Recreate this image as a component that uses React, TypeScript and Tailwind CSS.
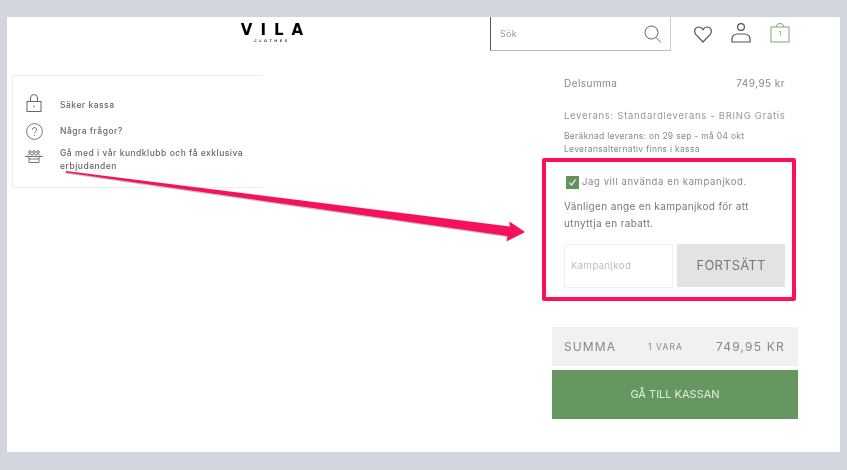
import React from "react";

const font = { fontFamily: '"Inter", "Liberation Sans", sans-serif' };

function Lock() {
  return (
    <svg width="16" height="18" viewBox="0 0 16 18" fill="none" stroke="#666" strokeWidth="1">
      <rect x="1" y="7.500" width="14" height="10" />
      <path d="M4.500 7.500V4a3.500 3.500 0 0 1 7 0v3.500" />
      <path d="M8 11.500v2" />
    </svg>
  );
}
function Question() {
  return (
    <svg width="17" height="17" viewBox="0 0 17 17" fill="none" stroke="#666" strokeWidth="0.9">
      <circle cx="8.500" cy="8.500" r="7.900" />
      <path d="M6.300 6.800a2.200 2.200 0 1 1 3.300 1.900c-.7.400-1.100.8-1.100 1.700M8.500 11.800v1" />
    </svg>
  );
}
function Club() {
  return (
    <svg width="18" height="13" viewBox="0 0 18 13" fill="none" stroke="#666" strokeWidth="0.9">
      <circle cx="5" cy="2" r="1.300" />
      <circle cx="9" cy="2" r="1.300" />
      <circle cx="13" cy="2" r="1.300" />
      <path d="M3 5.500c0-1 1-1.500 2-1.500s2 .5 2 1.500M7 5.500c0-1 1-1.500 2-1.500s2 .5 2 1.500M11 5.500c0-1 1-1.500 2-1.500s2 .5 2 1.500" />
      <path d="M0 6.500h18M4 9h10v3.500H4zM4 6.500V9M14 6.500V9" />
    </svg>
  );
}

function Row({ icon, children }: { icon: React.ReactNode; children: React.ReactNode }) {
  return (
    <div className="flex items-center gap-[16px] h-[18px]">
      <div className="w-[20px] flex justify-center shrink-0">{icon}</div>
      <div className="text-[8.500px] leading-[13px] tracking-[0.5px] font-medium text-[#666]">{children}</div>
    </div>
  );
}

export default function App() {
  return (
    <div className="relative w-[847px] h-[470px] bg-[#d1d5dd] pt-[17px] pl-[7px] overflow-hidden" style={font}>
      <div className="w-[833px] h-[435px] bg-white blur-[0.6px] flex flex-col">
        <header className="h-[34px] flex shrink-0">
          <div className="ml-[233px] w-[64px] pt-[6px] flex flex-col items-center" style={{ fontFamily: '"DejaVu Sans", sans-serif' }}>
            <div className="text-[15px] leading-[15px] font-bold tracking-[8px] text-black pl-[8px] whitespace-nowrap">VILA</div>
            <div className="text-[3.500px] leading-[5px] mt-[1px] tracking-[2.500px] text-[#444] font-bold whitespace-nowrap">CLOTHES</div>
          </div>
          <div className="ml-[186px] w-[181px] h-[34px] border-l border-b border-r border-l-[#555] border-b-[#bbb] border-r-[#ccc] flex items-center justify-between pl-[9px] pr-[8px]">
            <span className="text-[9px] text-[#999] tracking-[0.3px]">Sök</span>
            <svg width="18" height="18" viewBox="0 0 18 18" fill="none" stroke="#666" strokeWidth="1">
              <circle cx="7.500" cy="7.500" r="6.500" />
              <path d="M12 12.500l5 5" />
            </svg>
          </div>
          <div className="ml-[23px] flex items-start">
            <svg width="18" height="17" viewBox="0 0 18 17" fill="none" stroke="#555" strokeWidth="1.200" className="mt-[9px]">
              <path d="M9 16L1.800 8.300C-.5 5.300 1 1 4.700 1 6.700 1 8 2 9 3.800 10 2 11.300 1 13.300 1c3.700 0 5.200 4.300 2.900 7.300z" />
            </svg>
            <svg width="20" height="20" viewBox="0 0 20 20" fill="none" stroke="#555" strokeWidth="1.200" className="mt-[6px] ml-[19px]">
              <circle cx="10" cy="4" r="3.400" />
              <path d="M1 19v-3c0-3 2.500-5 5-5h8c2.500 0 5 2 5 5v3z" />
            </svg>
            <div className="relative w-[20px] h-[20px] mt-[6px] ml-[19px]">
              <svg width="20" height="20" viewBox="0 0 20 20" fill="none" stroke="#7aa675" strokeWidth="1">
                <rect x="1" y="4" width="18" height="15" />
                <path d="M6.500 4V3a3.500 2.500 0 0 1 7 0v1" />
              </svg>
              <span className="absolute left-0 right-0 top-[7px] text-center text-[6px] leading-[8px] text-[#888]">1</span>
            </div>
          </div>
        </header>

        <main className="flex flex-1">
          <aside className="ml-[5px] mt-[24px] w-[250px] h-[113px] border-l border-t border-b border-[#eeeeee] flex flex-col pt-[18px] pl-[11px] shrink-0 self-start">
            <Row icon={<Lock />}>
              <span className="relative top-[2px]">Säker kassa</span>
            </Row>
            <div className="mt-[10px]"><Row icon={<Question />}>Några frågor?</Row></div>
            <div className="flex items-start gap-[16px] mt-[7px]">
              <div className="w-[20px] flex justify-center shrink-0 mt-[3px]"><Club /></div>
              <div className="text-[8.500px] leading-[13px] tracking-[0.5px] font-medium text-[#666] w-[190px]">
                Gå med i vår kundklubb och få exklusiva erbjudanden
              </div>
            </div>
          </aside>

          <section className="ml-[280px] w-[254px] flex flex-col shrink-0 text-[#888]">
            <div className="pl-[22px] pr-[11px] pt-[25px]">
              <div className="flex justify-between text-[10px] leading-[14px] tracking-[0.45px]">
                <span>Delsumma</span>
                <span>749,95 kr</span>
              </div>
              <div className="mt-[19px] text-[9.500px] leading-[14px] tracking-[0.7px] text-[#999] whitespace-nowrap">
                Leverans: Standardleverans - BRING Gratis
              </div>
              <div className="mt-[7px] text-[8.500px] leading-[13px] tracking-[0.3px] text-[#888] whitespace-nowrap">
                <div>Beräknad leverans: on 29 sep - må 04 okt</div>
                <div>Leveransalternativ finns i kassa</div>
              </div>
            </div>
            <div className="mt-[2px] w-[254px] h-[143px] border-[4px] border-[#ff0f55] rounded-[2px] pl-[18px] pr-[7px] pt-[13px] flex flex-col">
              <div className="flex items-center gap-[3px] ml-[2px] text-[9.500px] leading-[14px] tracking-[0.6px] text-[#888] whitespace-nowrap">
                <span className="w-[13px] h-[13px] bg-[#64935f] flex items-center justify-center shrink-0">
                  <svg width="9" height="9" viewBox="0 0 9 9" fill="none" stroke="#fff" strokeWidth="1.200">
                    <path d="M1.500 4.500l2 2.500 4-5.500" />
                  </svg>
                </span>
                Jag vill använda en kampanjkod.
              </div>
              <div className="mt-[9px] text-[10px] leading-[17px] tracking-[0.35px] text-[#777] w-[200px]">
                Vänligen ange en kampanjkod för att utnyttja en rabatt.
              </div>
              <div className="mt-[12px] flex gap-[4px]">
                <div className="w-[109px] h-[44px] border border-[#f1f1f1] flex items-center pl-[6px] text-[9.500px] tracking-[0.45px] text-[#bbb]">
                  Kampanjkod
                </div>
                <div className="w-[108px] h-[43px] bg-[#e3e3e3] flex items-center justify-center text-[13px] tracking-[0.2px] text-[#777]">
                  FORTSÄTT
                </div>
              </div>
            </div>
            <div className="mt-[26px] ml-[10px] w-[246px] h-[39px] bg-[#f1f1f2] flex items-center pl-[12px] pr-[13px] text-[#888]">
              <span className="text-[12px] tracking-[1.100px] w-[84px]">SUMMA</span>
              <span className="text-[8.500px] tracking-[1.100px] relative top-[1px]">1 VARA</span>
              <span className="ml-auto text-[12px] tracking-[1.200px]">749,95 KR</span>
            </div>
            <div className="mt-[4px] ml-[10px] w-[246px] h-[49px] bg-[#659761] flex items-center justify-center text-[11px] text-[#e4ede3]">
              GÅ TILL KASSAN
            </div>
          </section>
        </main>
      </div>

      <svg className="absolute left-0 top-0 pointer-events-none blur-[0.4px]" width="847" height="470" viewBox="0 0 847 470" fill="none">
        <path d="M66 172.500L507.500 236L507 241L525 232L509.500 221.500L510 226.500L66 171Z" fill="#666" opacity="0.4" transform="translate(-1 1)" />
        <path d="M66 172.500L507.500 236L507 241L525 232L509.500 221.500L510 226.500L66 171Z" fill="#f7105a" />
      </svg>
    </div>
  );
}
